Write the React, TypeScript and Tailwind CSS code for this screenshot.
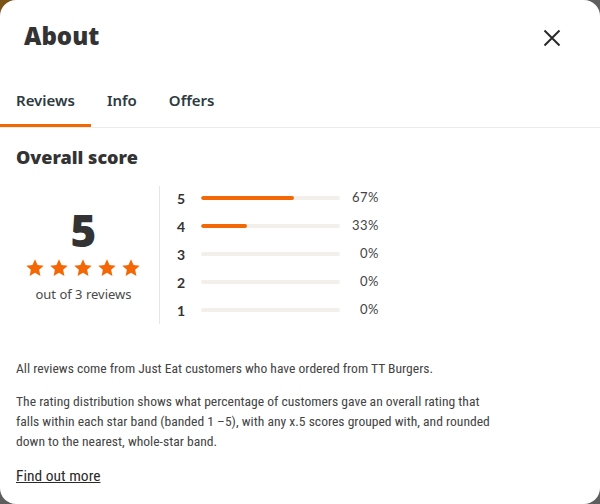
import React from "react";

const rows = [
  { label: "5", pct: 67 },
  { label: "4", pct: 33 },
  { label: "3", pct: 0 },
  { label: "2", pct: 0 },
  { label: "1", pct: 0 },
];

function Star() {
  return (
    <svg width="20" height="20" viewBox="0 0 24 24" aria-hidden="true">
      <path
        d="M12 1.5l3.09 6.86 7.41.79-5.55 5.02 1.57 7.33L12 17.77 5.48 21.5l1.57-7.33L1.5 9.15l7.41-.79z"
        fill="#f36805"
      />
    </svg>
  );
}

export default function App() {
  return (
    <div className="relative w-[600px] h-[504px] overflow-hidden bg-[#5e5e5e]">
      <div className="absolute -left-[10px] -top-[10px] w-[40px] h-[40px] rounded-full bg-[#7a5316]" />
      <div className="relative h-full bg-white rounded-[16px] flex flex-col">
        <div className="flex items-center justify-between pl-6 pr-[38px] pt-[22px]">
          <h1 className="text-[24px] leading-[28px] font-black text-[#333333] font-['Noto_Sans',sans-serif]">
            About
          </h1>
          <svg className="mt-[4px]" width="20" height="20" viewBox="0 0 20 20" aria-hidden="true">
            <path d="M2.5 2.5l15 15M17.5 2.5l-15 15" stroke="#2a2a2a" strokeWidth="2" />
          </svg>
        </div>

        <div className="mt-[26px] flex border-b border-[#ececec] font-['Noto_Sans',sans-serif]">
          <div className="px-4 pt-[14px] pb-[14px] border-b-[3px] border-[#f36805] text-[15px] leading-[20px] font-semibold text-[#2d3a40]">
            Reviews
          </div>
          <div className="px-4 pt-[14px] pb-[14px] border-b-[3px] border-transparent text-[15px] leading-[20px] font-semibold text-[#2d3a40]">
            Info
          </div>
          <div className="px-4 pt-[14px] pb-[14px] border-b-[3px] border-transparent text-[15px] leading-[20px] font-semibold text-[#2d3a40]">
            Offers
          </div>
        </div>

        <div className="px-4 pt-[17px]">
          <h2 className="text-[18px] leading-[24px] font-black text-[#333333] font-['Noto_Sans',sans-serif]">
            Overall score
          </h2>

          <div className="mt-[15px] flex">
            <div className="w-[144px] pr-2 mt-[2px] border-r border-[#e6e6e6] flex flex-col items-center justify-center">
              <div className="text-[44px] leading-[46px] font-black text-[#333333] font-['Noto_Sans',sans-serif]">
                5
              </div>
              <div className="mt-[5px] flex gap-[4px] -ml-[2px]">
                <Star />
                <Star />
                <Star />
                <Star />
                <Star />
              </div>
              <div className="mt-[7px] text-[13px] leading-[18px] text-[#4a4a4a] font-['Noto_Sans',sans-serif]">
                out of 3 reviews
              </div>
            </div>

            <div className="pl-[17px] font-['Lato',sans-serif]">
              {rows.map((r) => (
                <div key={r.label} className="h-[28px] flex items-center">
                  <div className="w-[24px] text-[14px] font-bold text-[#333333]">{r.label}</div>
                  <div className="w-[139px] h-[4px] rounded-full bg-[#f3f0ec] overflow-hidden">
                    <div
                      className="h-full rounded-full bg-[#f36805]"
                      style={{ width: `${r.pct}%` }}
                    />
                  </div>
                  <div className="w-[39px] text-right text-[13px] text-[#444444] tracking-[0.5px]">
                    {r.pct}%
                  </div>
                </div>
              ))}
            </div>
          </div>

          <div className="w-[484px] font-['Liberation_Sans_Narrow','Roboto_Condensed','DejaVu_Sans_Condensed',Roboto,sans-serif] text-[#444444]">
            <p className="mt-[34px] text-[13.6px] leading-[20px]">
              All reviews come from Just Eat customers who have ordered from TT Burgers.
            </p>
            <p className="mt-[13px] text-[13.6px] leading-[20px]">
              The rating distribution shows what percentage of customers gave an overall rating that
              falls within each star band (banded 1 –5), with any x.5 scores grouped with, and rounded
              down to the nearest, whole-star band.
            </p>
            <a className="block mt-[13px] text-[15.5px] leading-[24px] underline text-[#2a2a2a]" href="#">
              Find out more
            </a>
          </div>
        </div>
      </div>
    </div>
  );
}
